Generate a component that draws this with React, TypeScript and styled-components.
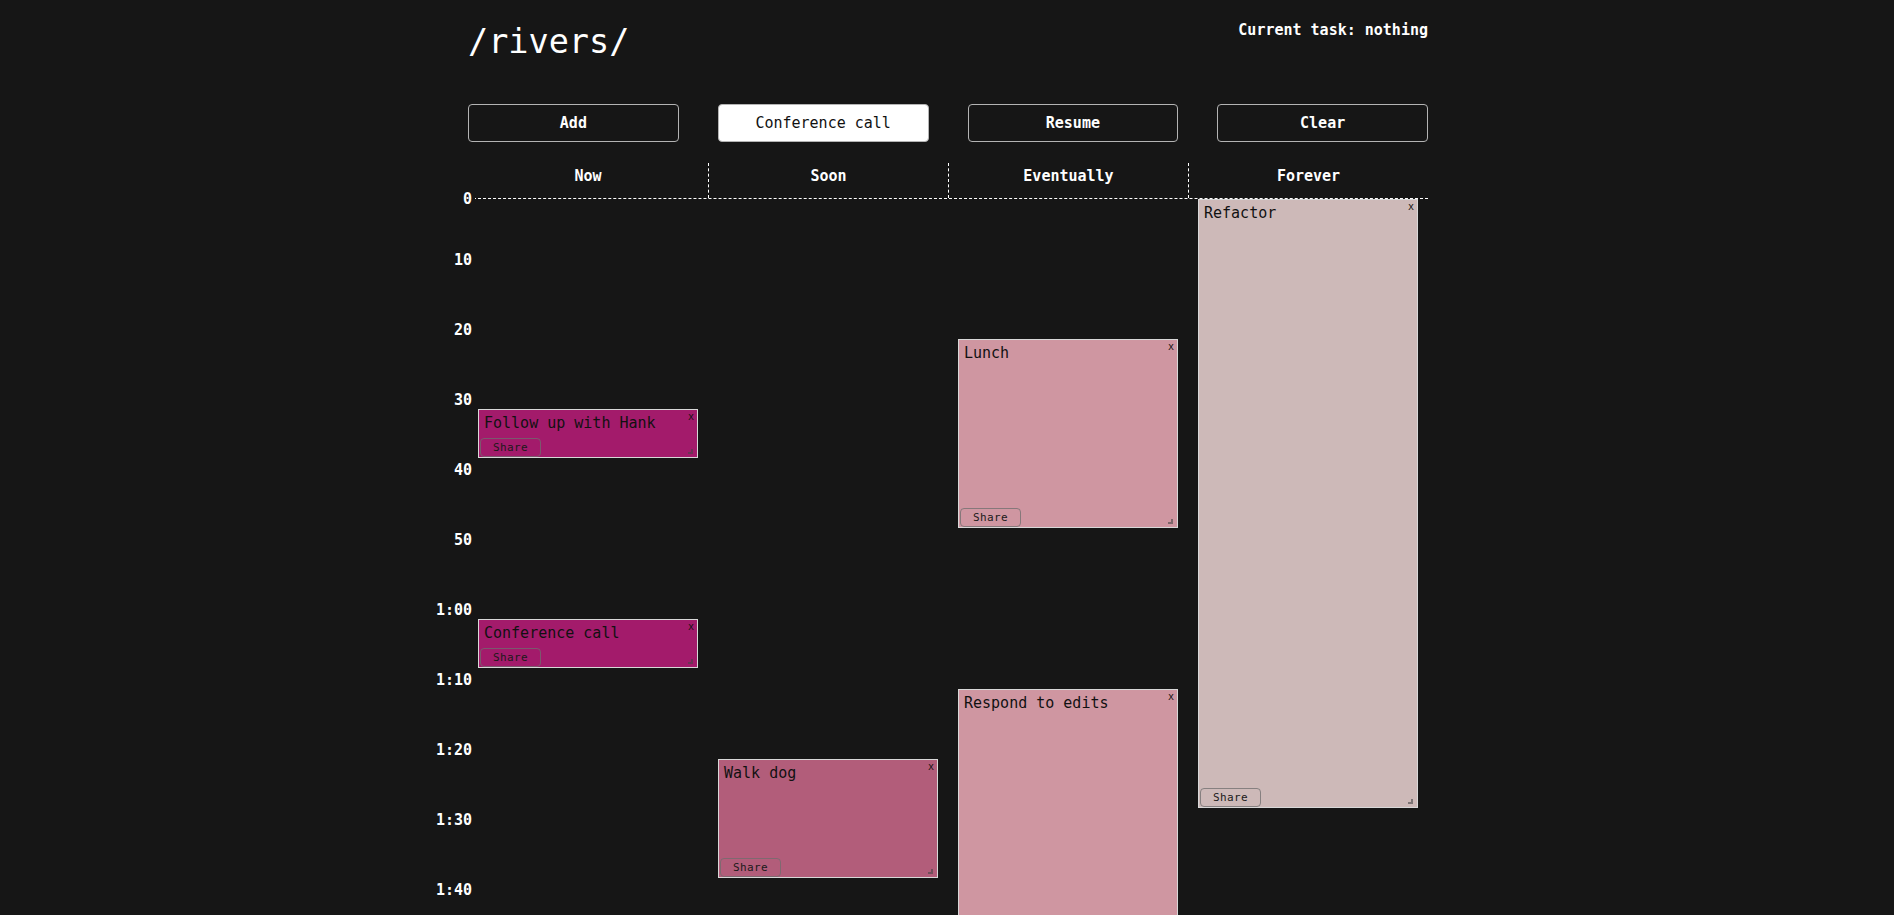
import React from "react";
import styled, { createGlobalStyle } from "styled-components";

const PX_PER_MIN = 7;

const GlobalStyle = createGlobalStyle`
  html, body {
    margin: 0;
    padding: 0;
    background: #161616;
    overflow: hidden;
  }
  body {
    padding-left: 2px;
    color: #ffffff;
    font-family: "DejaVu Sans Mono", "Liberation Mono", monospace;
  }
  * {
    box-sizing: border-box;
  }
`;

const Page = styled.div`
  width: 960px;
  margin: 0 auto;
`;

const TopBar = styled.header`
  display: flex;
  justify-content: space-between;
  align-items: flex-start;
  padding-top: 20px;
`;

const Title = styled.h1`
  margin: 2px 0 0;
  font-size: 33.5px;
  line-height: 40px;
  font-weight: normal;
`;

const CurrentTask = styled.div`
  font-size: 15px;
  line-height: 20px;
  font-weight: bold;
`;

const Toolbar = styled.nav`
  display: grid;
  grid-template-columns: repeat(4, 1fr);
  column-gap: 39px;
  margin-top: 42px;
`;

const ToolButton = styled.button<{ $active?: boolean }>`
  height: 38px;
  border: 1px solid #b4b4b4;
  border-radius: 4px;
  background: ${(p) => (p.$active ? "#ffffff" : "transparent")};
  color: ${(p) => (p.$active ? "#111111" : "#ffffff")};
  font-family: inherit;
  font-size: 15px;
  font-weight: ${(p) => (p.$active ? "normal" : "bold")};
  padding: 0;
  cursor: pointer;
`;

const ColumnHeaders = styled.div`
  display: grid;
  grid-template-columns: repeat(4, 1fr);
  margin-top: 21px;
  border-bottom: 1px dashed #ffffff;
`;

const HeaderCell = styled.div<{ $divider?: boolean }>`
  height: 35px;
  padding-top: 3px;
  line-height: 20px;
  text-align: center;
  font-size: 15px;
  font-weight: bold;
  border-left: ${(p) => (p.$divider ? "1px dashed #ffffff" : "none")};
`;

const Board = styled.div`
  position: relative;
  display: grid;
  grid-template-columns: repeat(4, 1fr);
  height: 1200px;
`;

const Ruler = styled.div`
  position: absolute;
  top: 0;
  right: calc(100% - 7px);
  width: 70px;
  height: 100%;
`;

const Tick = styled.div<{ $zero?: boolean }>`
  position: absolute;
  right: 0;
  padding-right: 3px;
  padding-left: ${(p) => (p.$zero ? "4px" : "0")};
  line-height: 20px;
  font-size: 15px;
  font-weight: bold;
  white-space: nowrap;
  background: ${(p) => (p.$zero ? "#161616" : "transparent")};
`;

const Lane = styled.div`
  position: relative;
`;

const Card = styled.div<{ $color: string }>`
  position: absolute;
  left: 10px;
  width: 220px;
  display: flex;
  flex-direction: column;
  border: 1px solid #d8d8d8;
  background: ${(p) => p.$color};
  color: #111111;
`;

const CardTitle = styled.div`
  padding: 4px 14px 0 5px;
  font-size: 15px;
  line-height: 18px;
`;

const CloseMark = styled.span`
  position: absolute;
  top: 1px;
  right: 3px;
  font-size: 10px;
  line-height: 12px;
  color: #111111;
  cursor: pointer;
`;

const ShareButton = styled.button`
  margin-top: auto;
  margin-left: 1px;
  align-self: flex-start;
  width: 61px;
  height: 19px;
  flex-shrink: 0;
  border: 1px solid rgba(110, 110, 110, 0.75);
  border-radius: 4px;
  background: transparent;
  font-family: inherit;
  font-size: 11px;
  letter-spacing: 0.4px;
  color: #1a1a1a;
  padding: 0;
`;

const ResizeGrip = styled.span`
  position: absolute;
  right: 4px;
  bottom: 3px;
  width: 5px;
  height: 5px;
  border-right: 2px solid rgba(70, 70, 70, 0.6);
  border-bottom: 2px solid rgba(70, 70, 70, 0.6);
`;

type Task = { title: string; start: number; duration: number; color: string };

const MAGENTA = "#a31b6b";
const ROSE = "#b25d7a";
const PINK = "#cf96a1";
const DUST = "#cdb9b8";

const lanes: { name: string; tasks: Task[] }[] = [
  {
    name: "Now",
    tasks: [
      { title: "Follow up with Hank", start: 30, duration: 7, color: MAGENTA },
      { title: "Conference call", start: 60, duration: 7, color: MAGENTA },
    ],
  },
  {
    name: "Soon",
    tasks: [{ title: "Walk dog", start: 80, duration: 17, color: ROSE }],
  },
  {
    name: "Eventually",
    tasks: [
      { title: "Lunch", start: 20, duration: 27, color: PINK },
      { title: "Respond to edits", start: 70, duration: 40, color: PINK },
    ],
  },
  {
    name: "Forever",
    tasks: [{ title: "Refactor", start: 0, duration: 87, color: DUST }],
  },
];

const ticks = [0, 10, 20, 30, 40, 50, 60, 70, 80, 90, 100];

function tickLabel(m: number): string {
  if (m < 60) return String(m);
  const h = Math.floor(m / 60);
  const mm = m % 60;
  return `${h}:${mm.toString().padStart(2, "0")}`;
}

export default function App() {
  return (
    <>
      <GlobalStyle />
      <Page>
        <TopBar>
          <Title>/rivers/</Title>
          <CurrentTask>Current task: nothing</CurrentTask>
        </TopBar>
        <Toolbar>
          <ToolButton>Add</ToolButton>
          <ToolButton $active>Conference call</ToolButton>
          <ToolButton>Resume</ToolButton>
          <ToolButton>Clear</ToolButton>
        </Toolbar>
        <ColumnHeaders>
          {lanes.map((l, i) => (
            <HeaderCell key={l.name} $divider={i > 0}>
              {l.name}
            </HeaderCell>
          ))}
        </ColumnHeaders>
        <Board>
          <Ruler>
            {ticks.map((m) => (
              <Tick
                key={m}
                $zero={m === 0}
                style={{ top: m === 0 ? -10 : m * PX_PER_MIN - 19 }}
              >
                {tickLabel(m)}
              </Tick>
            ))}
          </Ruler>
          {lanes.map((l) => (
            <Lane key={l.name}>
              {l.tasks.map((t) => (
                <Card
                  key={t.title}
                  $color={t.color}
                  style={{
                    top: t.start * PX_PER_MIN,
                    height: t.duration * PX_PER_MIN,
                  }}
                >
                  <CardTitle>{t.title}</CardTitle>
                  <CloseMark>x</CloseMark>
                  <ShareButton>Share</ShareButton>
                  <ResizeGrip />
                </Card>
              ))}
            </Lane>
          ))}
        </Board>
      </Page>
    </>
  );
}
